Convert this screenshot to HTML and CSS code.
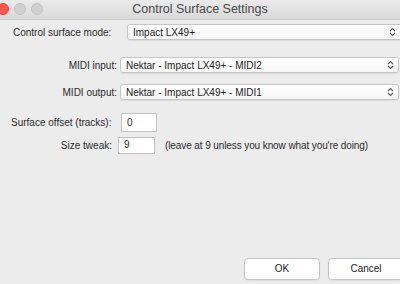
FILE: index.html
```html
<!DOCTYPE html>
<html>
    <head>
        <title>Control Surface Settings</title>
        <link rel="stylesheet" href="styles.css">
    </head>
    <body>
        <div class="window">
            <div class="titlebar">
                <div class="lights">
                    <span class="light close"></span>
                    <span class="light"></span>
                    <span class="light"></span>
                </div>
                <div class="title">Control Surface Settings</div>
            </div>

            <div class="content">
                <div class="row mode-row">
                    <label class="mode-label">Control surface mode:</label>
                    <div class="select wide">
                        <span>Impact LX49+</span>
                        <svg class="chevrons" width="7" height="10" viewBox="0 0 7 10">
                            <path d="M1 4 L3.5 1.5 L6 4 M1 6 L3.5 8.5 L6 6" fill="none" stroke="#555" stroke-width="1.1"/>
                        </svg>
                    </div>
                </div>

                <div class="row midi-row first-midi">
                    <label class="midi-label">MIDI input:</label>
                    <div class="select midi">
                        <span>Nektar - Impact LX49+ - MIDI2</span>
                        <svg class="chevrons" width="7" height="10" viewBox="0 0 7 10">
                            <path d="M1 4 L3.5 1.5 L6 4 M1 6 L3.5 8.5 L6 6" fill="none" stroke="#555" stroke-width="1.1"/>
                        </svg>
                    </div>
                </div>

                <div class="row midi-row">
                    <label class="midi-label">MIDI output:</label>
                    <div class="select midi">
                        <span>Nektar - Impact LX49+ - MIDI1</span>
                        <svg class="chevrons" width="7" height="10" viewBox="0 0 7 10">
                            <path d="M1 4 L3.5 1.5 L6 4 M1 6 L3.5 8.5 L6 6" fill="none" stroke="#555" stroke-width="1.1"/>
                        </svg>
                    </div>
                </div>

                <div class="row offset-row">
                    <label class="offset-label">Surface offset (tracks):</label>
                    <div class="field offset-field">0</div>
                </div>

                <div class="row tweak-row">
                    <label class="tweak-label">Size tweak:</label>
                    <div class="field tweak-field">9</div>
                    <span class="hint">(leave at 9 unless you know what you're doing)</span>
                </div>
            </div>

            <div class="buttons-container">
                <div class="button ok-button">OK</div>
                <div class="button cancel-button">Cancel</div>
            </div>
        </div>
    </body>
</html>
```

FILE: styles.css
```css
body {
    margin: 0;
    overflow: hidden;
    font-family: "Liberation Sans", Arial, sans-serif;
    font-size: 10px;
    color: #2b2b2b;
    background-color: #ececec;
}

.window {
    display: flex;
    flex-direction: column;
    height: 284px;
    width: 400px;
}

.titlebar {
    position: relative;
    height: 19px;
    border-bottom: 1px solid #cbcbcb;
    background: linear-gradient(#ebebeb, #d9d9d9);
}

.lights {
    position: absolute;
    left: -3px;
    top: 3px;
    display: flex;
    gap: 5px;
}

.light {
    width: 12px;
    height: 12px;
    border-radius: 50%;
    background-color: #d0d0d0;
    border: 0.5px solid #c2c2c2;
    box-sizing: border-box;
}

.light.close {
    background-color: #fc5753;
    border-color: #df4744;
}

.title {
    text-align: center;
    font-size: 12.5px;
    line-height: 19px;
    color: #4a4a4a;
}

.content {
    display: flex;
    flex-direction: column;
}

.row {
    display: flex;
    align-items: center;
}

.select {
    display: flex;
    align-items: center;
    justify-content: space-between;
    flex-shrink: 0;
    box-sizing: border-box;
    height: 16px;
    padding: 0 4px 0 5px;
    background: linear-gradient(#ffffff, #f6f6f6);
    border: 1px solid #c6c6c6;
    border-radius: 3px;
    box-shadow: 0 0.5px 1px rgba(0, 0, 0, 0.08);
    color: #222;
}

.mode-row {
    margin-top: 4px;
    padding-left: 13px;
}

.mode-label {
    width: 114px;
    flex-shrink: 0;
}

.select.wide {
    width: 280px;
    padding-right: 10px;
}

.midi-row {
    margin-top: 11px;
}

.midi-row.first-midi {
    margin-top: 17px;
}

.midi-label {
    width: 117px;
    text-align: right;
}

.select.midi {
    width: 279px;
    margin-left: 3px;
}

.field {
    box-sizing: border-box;
    background-color: #fff;
    border: 1px solid #c2c2c2;
    padding-left: 5px;
}

.offset-row {
    margin-top: 13px;
    padding-left: 11px;
}

.offset-label {
    width: 110px;
}

.offset-field {
    width: 36px;
    height: 19px;
    line-height: 18px;
}

.tweak-row {
    margin-top: 5px;
}

.tweak-label {
    width: 112px;
    text-align: right;
}

.tweak-field {
    width: 37px;
    height: 17px;
    line-height: 14px;
    margin-left: 6px;
}

.hint {
    margin-left: 10px;
    letter-spacing: -0.1px;
}

.buttons-container {
    display: flex;
    margin-top: auto;
    margin-bottom: 4px;
    padding-left: 244px;
    gap: 8px;
}

.button {
    box-sizing: border-box;
    height: 22px;
    line-height: 20px;
    text-align: center;
    background-color: #fff;
    border: 1px solid #c4c4c4;
    border-radius: 4px;
    box-shadow: 0 0.5px 1px rgba(0, 0, 0, 0.08);
    color: #222;
    flex-shrink: 0;
}

.ok-button {
    width: 76px;
}

.cancel-button {
    width: 76px;
}
```
